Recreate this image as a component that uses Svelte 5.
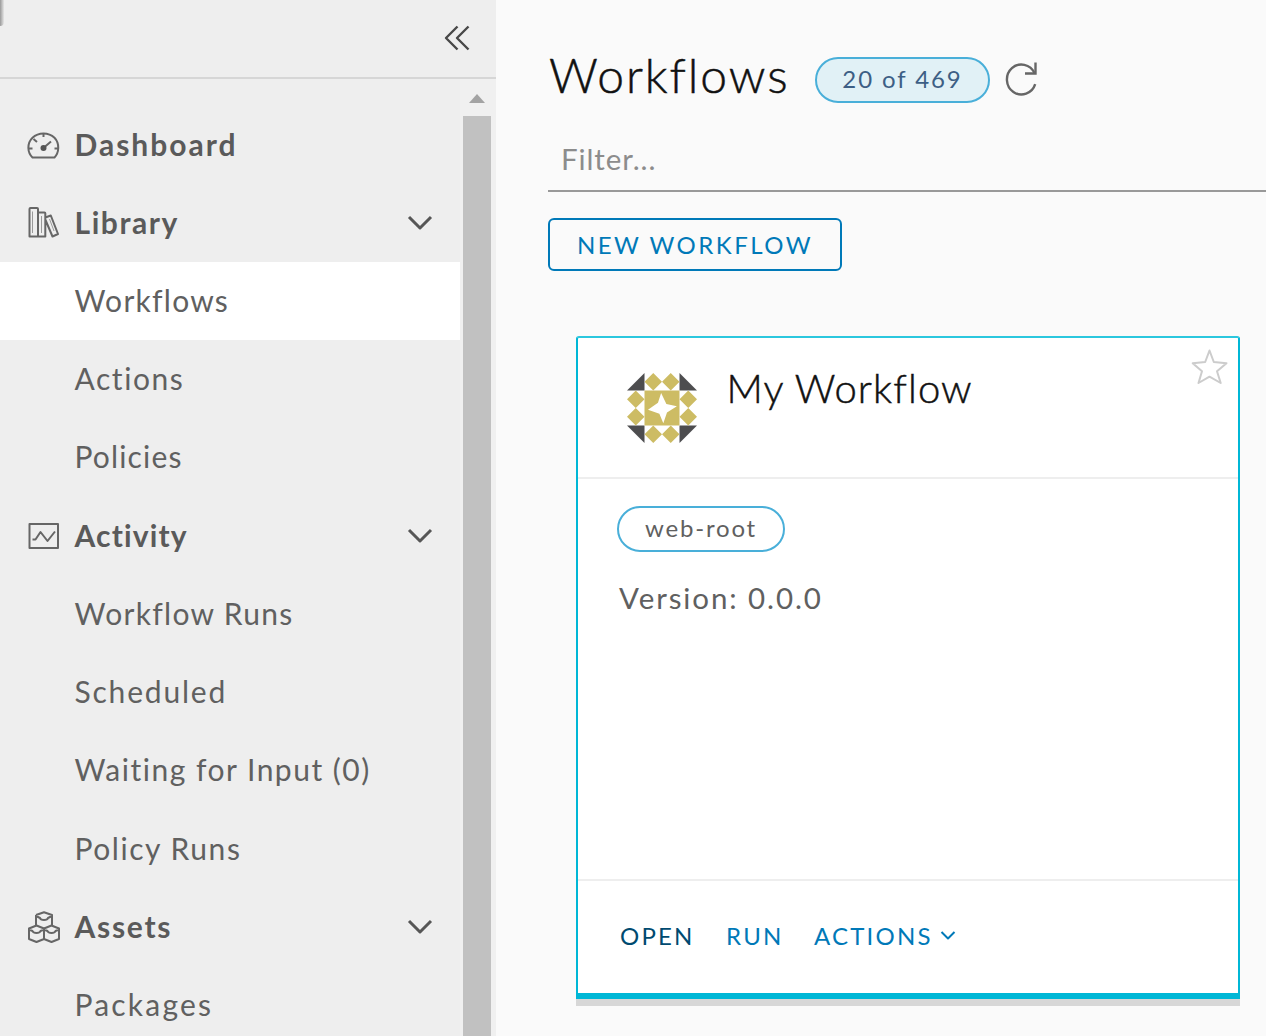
<script lang="ts">
	type NavItem = {
		label: string;
		tracking: number;
		icon?: string;
		group?: boolean;
		active?: boolean;
	};

	const items: NavItem[] = [
		{ label: 'Dashboard', tracking: 2, icon: 'dashboard' },
		{ label: 'Library', tracking: 1.55, icon: 'library', group: true },
		{ label: 'Workflows', tracking: 1.25, active: true },
		{ label: 'Actions', tracking: 1.55 },
		{ label: 'Policies', tracking: 1.15 },
		{ label: 'Activity', tracking: 1.15, icon: 'activity', group: true },
		{ label: 'Workflow Runs', tracking: 1.3 },
		{ label: 'Scheduled', tracking: 1.8 },
		{ label: 'Waiting for Input (0)', tracking: 1.5 },
		{ label: 'Policy Runs', tracking: 1.55 },
		{ label: 'Assets', tracking: 1.7, icon: 'assets', group: true },
		{ label: 'Packages', tracking: 2.2 }
	];

	let filter = '';
</script>

<div class="app">
	<aside class="sidebar">
		<header class="sidebar-header">
			<span class="corner"></span>
			<button class="collapse" aria-label="Collapse navigation">
				<svg width="26" height="26" viewBox="0 0 26 26">
					<path d="M13.5 1.5 2 13l11.5 11.5M24.5 1.5 13 13l11.5 11.5" />
				</svg>
			</button>
		</header>

		<div class="sidebar-body">
			<nav>
				{#each items as item}
					<a href="#top" class="nav-item" class:bold={item.icon} class:active={item.active}>
						<span class="nav-icon">
							{#if item.icon}
								<svg width="34" height="34" viewBox="0 0 34 34">
									{#if item.icon === 'dashboard'}
										<path d="M6.5 29.5C1.500 25 .5 15.500 6.500 9.700C12.500 4 22.500 4 28.500 9.700C34 15.500 33 25 28.500 29.500Z" />
										<path d="M17.500 5.500v3.500M2 20.500h4.500M28.500 20.500H33M7.500 11l3.500 3M18 19.500l7-6" />
										<circle class="fill" cx="17.500" cy="20" r="3" />
									{:else if item.icon === 'library'}
										<path d="M3.5 3q0-1 1-1h6.500q1 0 1 1v27.500h-8.500ZM12 6.500h6.500q.8 0 .8.800v23.200H12M19.300 11.500l5.500-2 7.200 18.500-5.500 2.500-7.200-17" />
										<path class="thin" d="M6.500 5.500v21.500M15.500 10v17M23.500 13l4.500 12" />
									{:else if item.icon === 'activity'}
										<path d="M3.500 5h28.500v24h-28.500Z" />
										<path d="M6.500 20.500h3l5-7.500 7 9 7.500-9.500" />
									{:else}
										<path d="M10 5 18 2.200 26 5V16M10 5V16M10 6l4 2q.5 2 4 2t4-2l4-2" />
										<path d="M3 18.500 10.500 15.500 18 18.500V29L10.500 32 3 29ZM3 19.500l3.500 1.500q.8 2 4 2t4-2L18 19.500" />
										<path d="M18 18.500 25.500 15.500 33 18.500V29L25.500 32 18 29M18 19.500l3.500 1.500q.8 2 4 2t4-2L33 19.500" />
									{/if}
								</svg>
							{/if}
						</span>
						<span class="nav-label" style="letter-spacing: {item.tracking}px">{item.label}</span>
						{#if item.group}
							<svg class="caret" width="26" height="18" viewBox="0 0 26 18">
								<path d="M2 3l11 11L24 3" />
							</svg>
						{/if}
					</a>
				{/each}
			</nav>
			<div class="scrollbar">
				<div class="arrow"></div>
				<div class="thumb"></div>
			</div>
		</div>
	</aside>

	<main>
		<div class="title-row">
			<h1>Workflows</h1>
			<span class="badge count">20 of 469</span>
			<svg class="refresh" width="36" height="36" viewBox="0 0 36 36">
				<path d="M31.2 23.2A14.5 15 0 1 1 30.5 12" />
				<path d="M31.5 1.500v11H21" />
			</svg>
		</div>

		<input class="filter" placeholder="Filter..." bind:value={filter} />

		<button class="new-workflow">NEW WORKFLOW</button>

		<article class="card">
			<div class="card-header">
				<svg class="identicon" width="70" height="70" viewBox="0 0 80 80">
					<g fill="#4d4d4f">
						<path d="M20 0v20H0ZM60 0v20h20ZM0 60h20v20ZM60 60h20L60 80Z" />
					</g>
					<g fill="#cdbc64">
						<path d="M30 0l10 10-10 10-10-10ZM50 0l10 10-10 10-10-10ZM30 60l10 10-10 10-10-10ZM50 60l10 10-10 10-10-10Z" />
						<path d="M10 20l10 10-10 10L0 30ZM10 40l10 10-10 10L0 50ZM70 20l10 10-10 10-10-10ZM70 40l10 10-10 10-10-10Z" />
						<path fill-rule="evenodd" d="M20 20h40v40H20ZM39 22.800 35.400 33.900 24 42 37 46.500 41.500 57.500 45.700 45 57 38 45 35.400Z" />
					</g>
				</svg>
				<h2>My Workflow</h2>
				<svg class="star" width="38" height="38" viewBox="0 0 38 38">
					<path d="M18.500 2.500 22.800 14 35.500 15.200 26 23.300 29.700 35 18.500 28.700 7.500 35 11 23.300 1.700 15.200 14.200 14Z" />
				</svg>
			</div>
			<div class="card-body">
				<span class="badge tag">web-root</span>
				<p>Version: 0.0.0</p>
			</div>
			<div class="card-footer">
				<button class="open">OPEN</button>
				<button class="run">RUN</button>
				<button class="actions">
					ACTIONS
					<svg width="16" height="11" viewBox="0 0 16 11">
						<path d="M1.5 2 8 8.5 14.5 2" />
					</svg>
				</button>
			</div>
		</article>
	</main>
</div>

<style>
	:global(body) {
		overflow: hidden;
		background: #fafafa;
	}

	.app {
		display: flex;
		width: 1266px;
		height: 1036px;
		overflow: hidden;
		color: #565656;
		font-family: Lato, 'Open Sans', sans-serif;
	}

	.app * {
		box-sizing: border-box;
	}

	svg {
		flex: none;
		fill: none;
		stroke: #666;
		stroke-width: 2;
		stroke-linejoin: round;
	}

	button {
		padding: 0;
		border: 0;
		background: none;
		font: inherit;
		cursor: pointer;
	}

	/* Sidebar */
	.sidebar {
		display: flex;
		flex: none;
		flex-direction: column;
		width: 496px;
		background: #eee;
	}

	.sidebar-header {
		position: relative;
		display: flex;
		flex: none;
		justify-content: flex-end;
		height: 79px;
		padding: 25px 26px 0 0;
		border-bottom: 2px solid #d6d6d6;
	}

	/* Edge of the panel that overlaps the top left corner */
	.corner {
		position: absolute;
		top: 0;
		left: 0;
		width: 4px;
		height: 26px;
		border-radius: 0 0 4px 0;
		background: linear-gradient(90deg, #999, #e6e6e6);
	}

	.collapse {
		height: 26px;
	}

	.collapse svg {
		display: block;
		stroke: #484848;
		stroke-width: 2.4;
	}

	.sidebar-body {
		display: flex;
		flex: 1;
		min-height: 0;
	}

	nav {
		width: 460px;
		padding-top: 26.5px;
	}

	.nav-item {
		display: flex;
		align-items: center;
		height: 78.27px;
		padding: 0 27px 0 26px;
		color: #606060;
		font-size: 30px;
		text-decoration: none;
		white-space: nowrap;
	}

	.nav-item.active {
		background: #fff;
	}

	.nav-item.bold {
		color: #5a5a5a;
		font-weight: 700;
	}

	.nav-icon {
		width: 48.5px;
		height: 34px;
	}

	.nav-icon svg {
		display: block;
	}

	.nav-icon .fill {
		fill: #555;
		stroke: none;
	}

	.nav-icon .thin {
		stroke: #999;
		stroke-width: 1;
	}

	.nav-label {
		flex: 1;
		padding-bottom: 3px;
	}

	.bold .nav-label {
		padding-bottom: 2px;
	}

	.caret {
		stroke: #565656;
		stroke-width: 3;
	}

	.scrollbar {
		display: flex;
		flex-direction: column;
		align-items: center;
		width: 36px;
		padding-right: 2px;
		background: #f0f0f0;
	}

	.arrow {
		width: 0;
		margin: 15px 0 13px;
		border: 8px solid transparent;
		border-top: 0;
		border-bottom: 9px solid #a3a3a3;
	}

	.thumb {
		flex: 1;
		width: 28px;
		background: #c1c1c1;
	}

	/* Content */
	main {
		flex: 1;
		min-width: 0;
		padding: 45px 0 0 52px;
	}

	.title-row {
		display: flex;
		align-items: center;
		height: 64px;
	}

	h1,
	h2,
	p {
		margin: 0;
		font-weight: 400;
		white-space: nowrap;
	}

	h1,
	h2 {
		color: #111;
		font-weight: 300;
		-webkit-text-stroke: 0.5px #111;
	}

	h1 {
		width: 267px;
		padding: 0 0 5px 1px;
		font-size: 48px;
		line-height: 64px;
		letter-spacing: 1.9px;
	}

	.badge {
		display: flex;
		align-items: center;
		justify-content: center;
		height: 46px;
		padding-bottom: 3px;
		border: 2px solid #49afd9;
		border-radius: 23px;
		font-size: 24px;
		white-space: nowrap;
	}

	.count {
		width: 175px;
		margin-top: 6px;
		background: #e1f1f6;
		color: #3d5f85;
		letter-spacing: 1.9px;
	}

	.refresh {
		margin: 4px 0 0 14px;
		stroke-width: 2.4;
		stroke-linejoin: miter;
	}

	.filter {
		display: block;
		width: 100%;
		height: 56px;
		margin-top: 27px;
		padding: 0 13px 9px;
		border: 0;
		border-bottom: 2px solid #999;
		background: none;
		color: #565656;
		font-family: inherit;
		font-size: 29.5px;
		letter-spacing: 0.9px;
		outline: none;
	}

	.filter::placeholder {
		color: #8c8c8c;
	}

	.new-workflow {
		display: block;
		width: 294px;
		height: 53px;
		margin-top: 26px;
		border: 2px solid #0079b8;
		border-radius: 6px;
		color: #0079b8;
		font-size: 24px;
		letter-spacing: 2.5px;
	}

	.card {
		width: 664px;
		height: 663px;
		margin: 65px 0 0 28px;
		border: 2px solid #00b7d6;
		border-top-color: #2bc7de;
		border-bottom-width: 6px;
		border-radius: 3px 3px 0 0;
		background: #fff;
		box-shadow: 0 7px 0 #d7d7d7;
	}

	.card-header {
		display: flex;
		height: 141px;
		padding: 0 9px 0 49px;
		border-bottom: 2px solid #eee;
	}

	.identicon {
		margin-top: 35px;
		stroke: none;
	}

	h2 {
		flex: 1;
		padding: 25px 0 0 29.5px;
		font-size: 40px;
		line-height: 50px;
		letter-spacing: 1.1px;
	}

	.star {
		margin-top: 10px;
		stroke: #ccc;
	}

	.card-body {
		height: 402px;
		padding: 27px 0 0 39px;
		border-bottom: 2px solid #eee;
	}

	.tag {
		width: 168px;
		color: #606060;
		letter-spacing: 1.8px;
	}

	.card-body p {
		padding: 26px 0 0 2px;
		color: #606060;
		font-size: 29.5px;
		line-height: 40px;
		letter-spacing: 1.9px;
	}

	.card-footer {
		display: flex;
		align-items: center;
		height: 112px;
		padding: 0 0 3px 42px;
	}

	.card-footer button {
		color: #0079b8;
		font-size: 24px;
		letter-spacing: 2.2px;
		text-align: left;
	}

	.card-footer .open {
		width: 106px;
		color: #004a70;
	}

	.card-footer .run {
		width: 88px;
	}

	.card-footer .actions {
		display: flex;
		gap: 7px;
		align-items: center;
	}

	.actions svg {
		stroke: #0079b8;
	}
</style>
